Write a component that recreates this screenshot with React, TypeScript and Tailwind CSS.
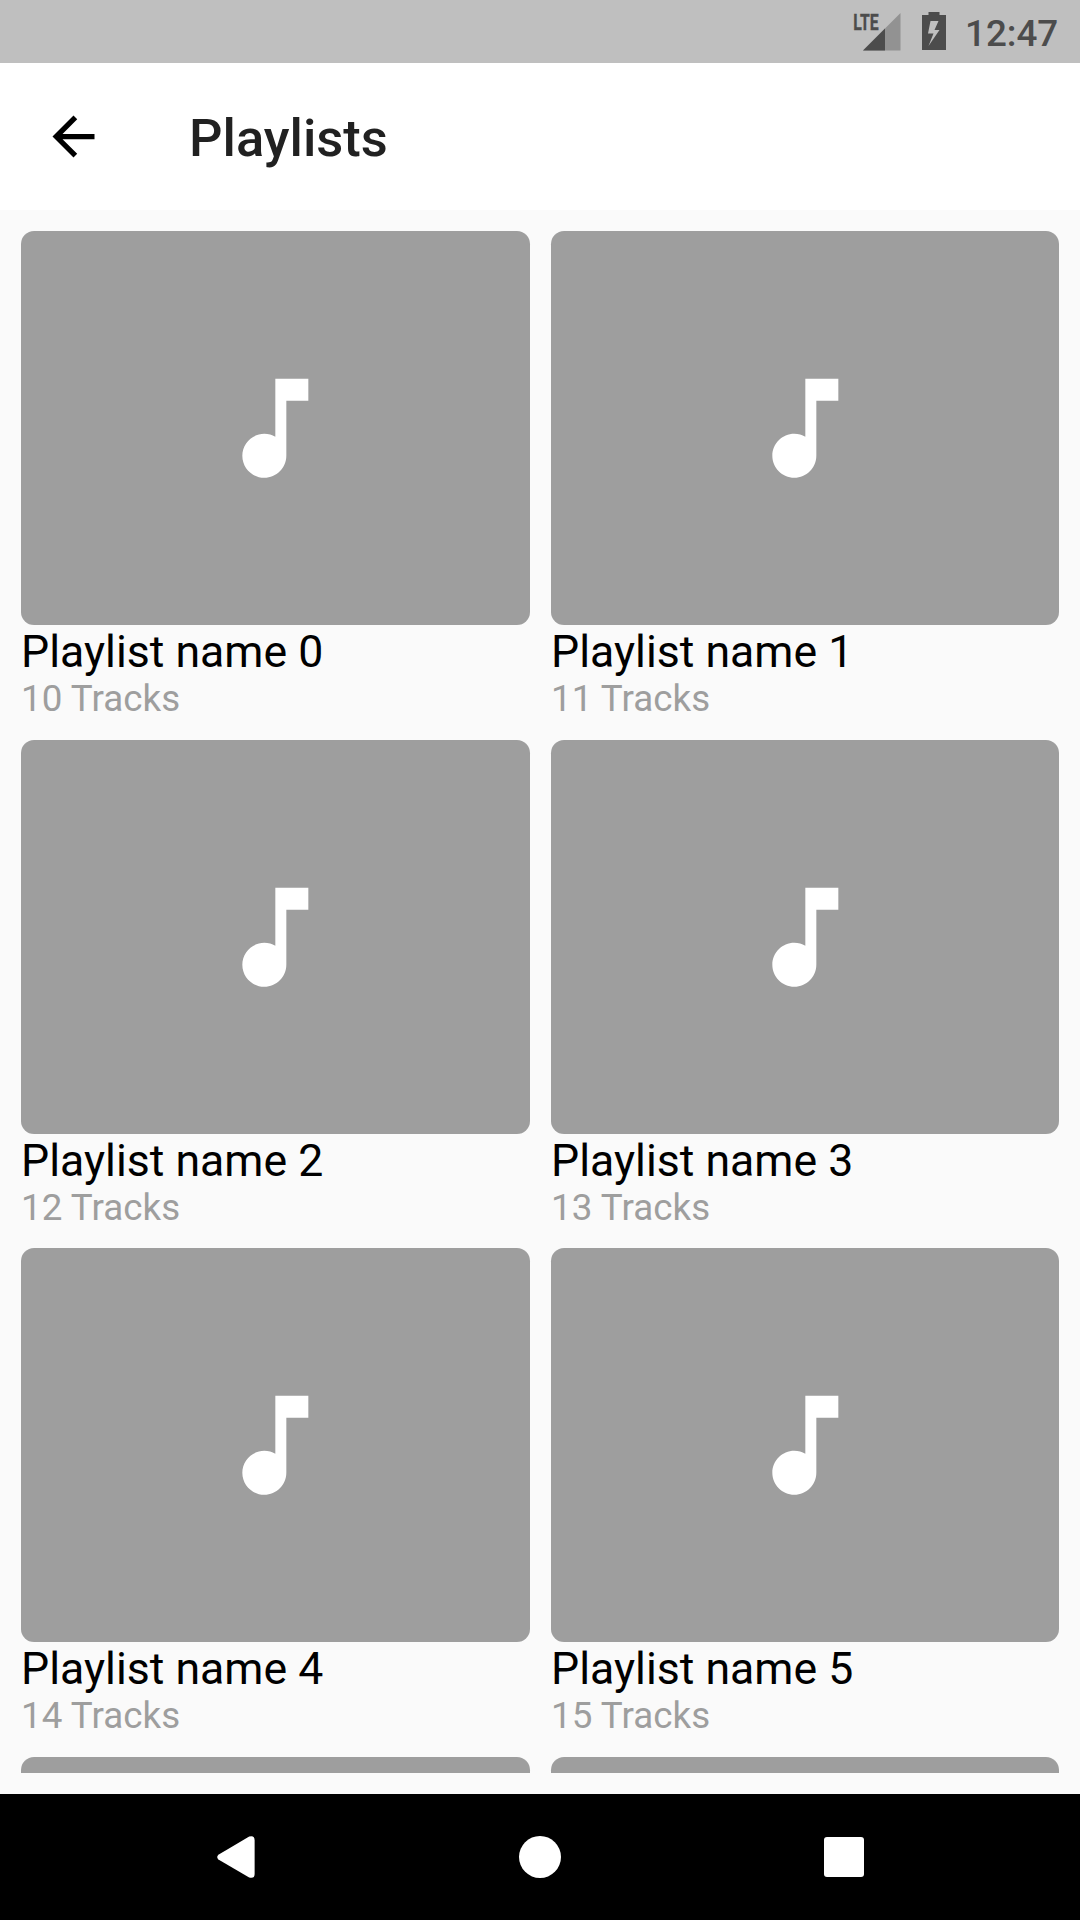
const playlists = Array.from({ length: 6 }, (_, i) => ({
  name: `Playlist name ${i}`,
  tracks: `${10 + i} Tracks`,
}));

function StatusBar() {
  return (
    <div className="flex h-[63px] shrink-0 items-start bg-[#bfbfbf] text-[#4c4c4c]">
      <svg className="ml-[850px] h-[63px] w-[54px] shrink-0" viewBox="850 0 54 63">
        <path d="M863 50.5 900.5 13V50.5Z" fill="#929292" />
        <path d="M863 50.5 885 28.5V50.5Z" fill="#4c4c4c" />
        <text
          x="853.2"
          y="29.8"
          textLength="25.4"
          lengthAdjust="spacingAndGlyphs"
          fill="#4c4c4c"
          stroke="#4c4c4c"
          strokeWidth="0.4"
          className="font-['Roboto',sans-serif] text-[22.5px] font-bold"
        >
          LTE
        </text>
      </svg>
      <svg className="ml-[18px] h-[63px] w-6 shrink-0" viewBox="922 0 24 63">
        <path
          fillRule="evenodd"
          fill="#4c4c4c"
          d="M928.5 12H939.5V15H946V50H922V15H928.5ZM930.5 21 928 33.5H933.5L928.5 46 939.5 30H934.5L938.5 21Z"
        />
      </svg>
      <span className="ml-[19px] whitespace-nowrap text-[36.75px] font-medium leading-[67px]">12:47</span>
    </div>
  );
}

function AppBar() {
  return (
    <header className="flex h-[147px] shrink-0 items-center bg-white pl-[42px]">
      <svg className="size-[63px]" viewBox="0 0 24 24" fill="#000">
        <path d="M20 11H7.83l5.59-5.59L12 4l-8 8 8 8 1.41-1.41L7.83 13H20v-2z" />
      </svg>
      <h1 className="ml-[84px] pt-0.5 text-[52.5px] font-medium leading-[62px] text-[#212121]">Playlists</h1>
    </header>
  );
}

function PlaylistCard({ name, tracks }: { name: string; tracks: string }) {
  return (
    <article className="h-[487.7px]">
      <div className="flex h-[394px] items-center rounded-[13.125px] bg-[#9e9e9e] pl-[188px]">
        <svg className="size-[132px]" viewBox="-0.06 -0.05 24 24" fill="#fff">
          <path d="M12 3v10.55c-.59-.34-1.27-.55-2-.55-2.21 0-4 1.79-4 4s1.79 4 4 4 4-1.79 4-4V7h4V3h-6z" />
        </svg>
      </div>
      <h2 className="whitespace-nowrap text-[44.625px] leading-[54px] text-black">{name}</h2>
      <p className="whitespace-nowrap text-[36.75px] leading-[40px] tracking-[0.05px] text-[#9e9e9e]">{tracks}</p>
    </article>
  );
}

function NavigationBar() {
  return (
    <nav className="flex h-[126px] shrink-0 items-center bg-black pl-[217px]">
      <svg className="h-[42px] w-[38px]" viewBox="0 0 38 42" fill="#fff">
        <path d="M1.4 18.8 32.2.5Q37.6-1 37.6 4V38Q37.6 43 32.2 41.5L1.4 23.4Q-1 21.1 1.4 18.8Z" />
      </svg>
      <div className="ml-[264px] size-[42px] rounded-full bg-white" />
      <div className="ml-[263px] size-[40px] rounded-[3px] bg-white" />
    </nav>
  );
}

export default function App() {
  return (
    <div className="flex h-[1920px] w-[1080px] flex-col overflow-hidden bg-[#fafafa] font-['Roboto',sans-serif]">
      <StatusBar />
      <AppBar />
      <main className="min-h-0 flex-1 p-[21px]">
        <div className="grid h-full grid-cols-[509px_508px] content-start gap-[21px] overflow-hidden">
          {playlists.map((playlist) => (
            <PlaylistCard key={playlist.name} {...playlist} />
          ))}
          <div className="h-[394px] rounded-[13.125px] bg-[#9e9e9e]" />
          <div className="h-[394px] rounded-[13.125px] bg-[#9e9e9e]" />
        </div>
      </main>
      <NavigationBar />
    </div>
  );
}
